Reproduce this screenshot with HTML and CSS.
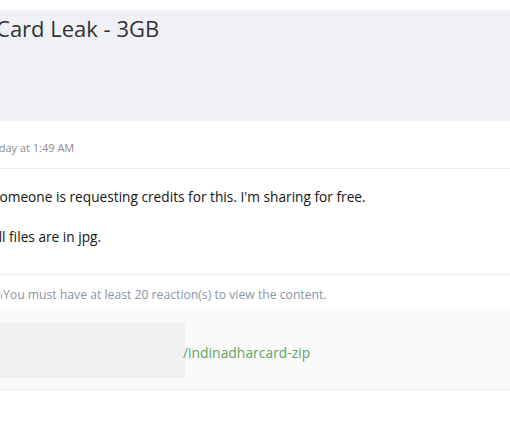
FILE: index.html
```html
<!DOCTYPE html>
<html lang="en">
<head>
    <meta charset="UTF-8">
    <title>Card Leak - 3GB</title>
    <link rel="stylesheet" href="styles.css">
</head>
<body>
    <div class="page">
        <div class="thread-header">
            <h1 class="thread-title">Aadhar Card Leak - 3GB</h1>
        </div>

        <div class="message">
            <div class="message-attribution">Today at 1:49 AM</div>

            <div class="message-body">
                Someone is requesting credits for this. I'm sharing for free.<br><br>
                <span class="message-body-second">All files are in jpg.</span>
            </div>

            <div class="message-notice">
                <span class="notice-icon"></span>
                You must have at least 20 reaction(s) to view the content.
            </div>

            <div class="message-attachment">
                <div class="redacted"></div>
                <a class="attachment-link" href="#">/indinadharcard-zip</a>
            </div>
        </div>
    </div>
</body>
</html>
```

FILE: styles.css
```css
body {
    margin: 0;
    padding-top: 10px;
    font-family: "Open Sans", "Noto Sans", sans-serif;
    color: #141414;
    background: #fff;
    overflow: hidden;
}

.page {
    margin-left: -8px;
}

.thread-header {
    height: 111px;
    background-color: #eff1f5;
    border-top: 1px solid #f2f3f5;
    box-sizing: border-box;
    padding: 2px 0 0 0;
}

.thread-title {
    margin: 0 0 0 -76px;
    font-size: 22px;
    font-weight: 400;
    color: #333;
    white-space: nowrap;
}

.message-attribution {
    height: 47px;
    line-height: 53px;
    font-size: 11px;
    color: #8c8c8c;
    border-bottom: 1px solid #ececec;
    margin-left: -6px;
}

.message-body {
    padding: 18px 0 27px 0;
    font-size: 13.7px;
    line-height: 20px;
    border-bottom: 1px solid #ececec;
}

.message-body-second {
    margin-left: -2px;
}

.message-notice {
    height: 34px;
    line-height: 40px;
    font-size: 12.2px;
    color: #8795a8;
    position: relative;
    padding-left: 11px;
}

.notice-icon {
    position: absolute;
    left: 7px;
    top: 19px;
    width: 2px;
    height: 5px;
    border-right: 1px solid #a6b0bd;
}

.message-attachment {
    display: flex;
    align-items: center;
    height: 80px;
    background-color: #fafafa;
    border-bottom: 1px solid #ececec;
}

.redacted {
    width: 193px;
    height: 55px;
    background-color: #f0f0f0;
    margin-top: 3px;
}

.attachment-link {
    font-size: 13.9px;
    color: #63a35f;
    text-decoration: none;
    margin-left: -2px;
    margin-top: 6px;
}
```
